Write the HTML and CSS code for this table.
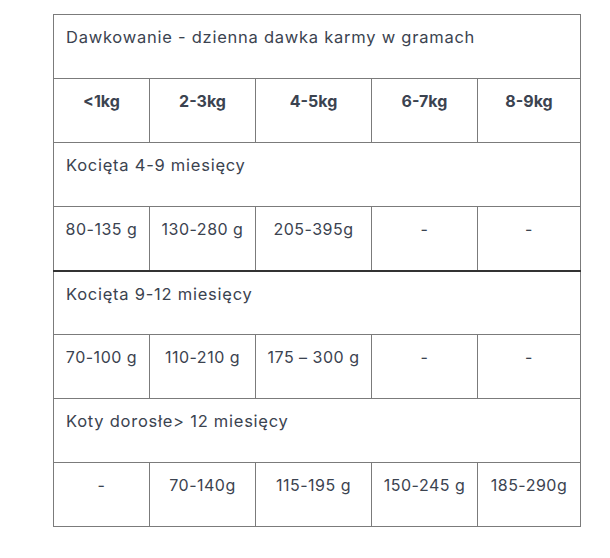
FILE: index.html
```html
<!DOCTYPE html>
<html lang="pl">
<head>
<meta charset="utf-8">
<link rel="stylesheet" href="styles.css">
</head>
<body>
<div class="wrap">
<table class="dose">
<colgroup>
<col class="c1"><col class="c2"><col class="c3"><col class="c4"><col class="c5">
</colgroup>
<tbody>
<tr><td colspan="5" class="label">Dawkowanie - dzienna dawka karmy w gramach</td></tr>
<tr class="head"><td>&lt;1kg</td><td>2-3kg</td><td>4-5kg</td><td>6-7kg</td><td>8-9kg</td></tr>
<tr><td colspan="5" class="label">Kocięta 4-9 miesięcy</td></tr>
<tr class="data"><td>80-135 g</td><td>130-280 g</td><td>205-395g</td><td>-</td><td>-</td></tr>
<tr class="sep"><td colspan="5" class="label">Kocięta 9-12 miesięcy</td></tr>
<tr class="data"><td>70-100 g</td><td>110-210 g</td><td>175 – 300 g</td><td>-</td><td>-</td></tr>
<tr><td colspan="5" class="label">Koty dorosłe&gt; 12 miesięcy</td></tr>
<tr class="data"><td>-</td><td>70-140g</td><td>115-195 g</td><td>150-245 g</td><td>185-290g</td></tr>
</tbody>
</table>
</div>
</body>
</html>
```
FILE: styles.css
```css
html, body {
  margin: 0;
  padding: 0;
  background: #fff;
}
.wrap {
  padding: 14px 0 0 53px;
}
.dose {
  border-collapse: collapse;
  table-layout: fixed;
  width: 527px;
  font-family: "Inter", "Open Sans", sans-serif;
  font-size: 16px;
  line-height: 24px;
  color: #3b4350;
}
.c1 { width: 96px; }
.c2 { width: 106px; }
.c3 { width: 116px; }
.c4 { width: 106px; }
.c5 { width: 103px; }
.dose tr { height: 64px; }
.dose td {
  border: 1px solid #7b7b7b;
  vertical-align: top;
  padding: 10px 2px 0;
  text-align: center;
  white-space: nowrap;
  overflow: hidden;
}
.data td {
  letter-spacing: 0.5px;
}
.dose td.label {
  text-align: left;
  padding-left: 12px;
  font-size: 16.5px;
  letter-spacing: 0.75px;
}
.head td {
  font-weight: 700;
}
.sep td {
  border-top: 2px solid #333;
}
```
